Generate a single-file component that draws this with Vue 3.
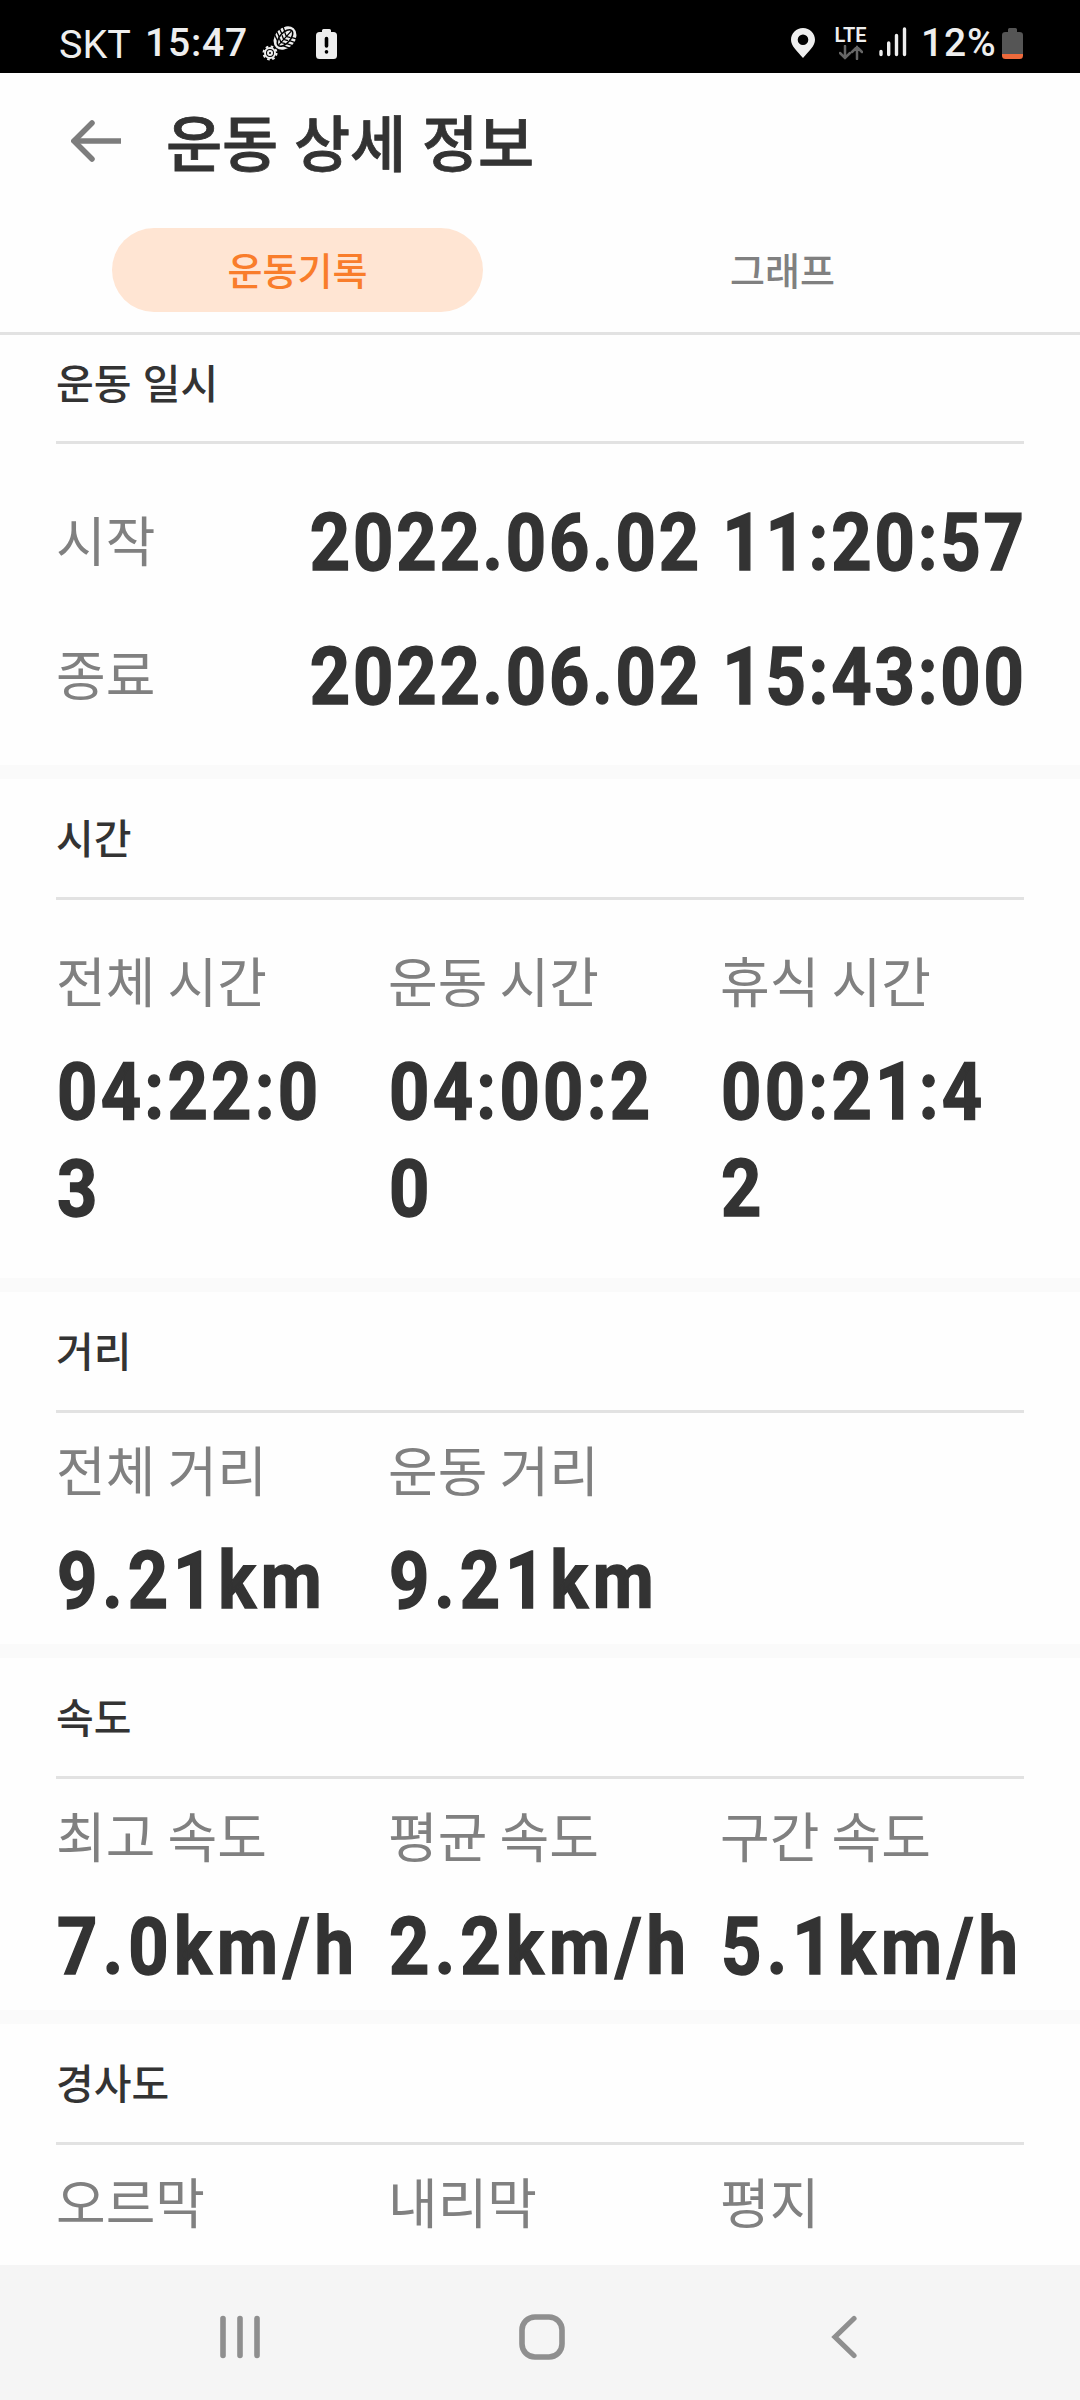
<script setup>
import { ref } from 'vue'

const tabs = ['운동기록', '그래프']
const activeTab = ref(0)

const period = [
    { label: '시작', value: '2022.06.02 11:20:57' },
    { label: '종료', value: '2022.06.02 15:43:00' }
]

const sections = [
    {
        key: 'time',
        title: '시간',
        items: [
            { label: '전체 시간', value: '04:22:03' },
            { label: '운동 시간', value: '04:00:20' },
            { label: '휴식 시간', value: '00:21:42' }
        ]
    },
    {
        key: 'distance',
        title: '거리',
        items: [
            { label: '전체 거리', value: '9.21km' },
            { label: '운동 거리', value: '9.21km' }
        ]
    },
    {
        key: 'speed',
        title: '속도',
        items: [
            { label: '최고 속도', value: '7.0km/h' },
            { label: '평균 속도', value: '2.2km/h' },
            { label: '구간 속도', value: '5.1km/h' }
        ]
    },
    {
        key: 'slope',
        title: '경사도',
        items: [
            { label: '오르막' },
            { label: '내리막' },
            { label: '평지' }
        ]
    }
]
</script>

<template>
    <div class="screen">
        <header class="status">
            <span class="carrier">SKT</span>
            <span class="clock">15:47</span>
            <svg class="boot" width="36" height="36" viewBox="0 0 36 36">
                <g transform="rotate(42 23 12)">
                    <ellipse cx="23" cy="12" rx="10" ry="13" fill="#eee" />
                    <path d="M23 3v18M12 4l6 3M11 8l7 3M11 12l7 3M12 16l7 3M34 4l-6 3M35 8l-7 3M35 12l-7 3M34 16l-7 3M19 8l4 2 4-2M19 12l4 2 4-2M19 16l4 2 4-2" fill="none" stroke="#000" stroke-width="1.300" />
                    <ellipse cx="23" cy="12" rx="5.200" ry="10" fill="none" stroke="#000" stroke-width="1.500" />
                </g>
                <circle cx="8" cy="27" r="6.500" fill="none" stroke="#eee" stroke-width="2" stroke-dasharray="2.600 2.500" />
                <circle cx="8" cy="27" r="5" fill="none" stroke="#eee" stroke-width="2" />
                <circle cx="8" cy="27" r="2" fill="none" stroke="#eee" stroke-width="2" />
            </svg>
            <svg class="alert" width="21" height="30" viewBox="0 0 21 30">
                <path d="M6 3V1.500Q6 0 7.500 0h6Q15 0 15 1.500V3h2.500Q21 3 21 6.500v20Q21 30 17.500 30h-14Q0 30 0 26.500v-20Q0 3 3.500 3z" fill="#eee" />
                <path d="M10.500 9.500v7.500M10.500 22.800v.2" fill="none" stroke="#000" stroke-width="3.600" stroke-linecap="round" />
            </svg>
            <svg class="pin" width="24" height="30" viewBox="0 0 24 30">
                <path d="M12 0C5.300 0 0 5.200 0 11.800 0 18 6 23 12 30c6-7 12-12 12-18.200C24 5.200 18.700 0 12 0zm0 6.500a5.300 5.300 0 1 1 0 10.600 5.300 5.300 0 0 1 0-10.600z" fill="#eee" />
            </svg>
            <div class="network">
                <span>LTE</span>
                <svg width="24" height="15" viewBox="0 0 24 15">
                    <path d="M6 1v12M1 8l5 5 5-5M18 14V2M13 7l5-5 5 5" fill="none" stroke="#666" stroke-width="2.500" stroke-linecap="round" />
                </svg>
            </div>
            <svg class="signal" width="28" height="30" viewBox="0 0 28 30">
                <path d="M2 24.500v3M9.700 16v11.500M17.500 8.500v19M25.500 2v25.500" fill="none" stroke="#eee" stroke-width="3.400" stroke-linecap="round" />
            </svg>
            <span class="percent">12%</span>
            <svg class="battery" width="21" height="31" viewBox="0 0 21 31">
                <path d="M6 4V1.500Q6 0 7.500 0h6Q15 0 15 1.500V4h2.500Q21 4 21 7v19H0V7Q0 4 3.500 4z" fill="#555" />
                <path d="M0 26h21v1.500q0 3.500-3.500 3.500h-14Q0 31 0 27.500z" fill="#ee6a3c" />
            </svg>
        </header>

        <div class="title-bar">
            <svg width="50" height="42" viewBox="0 0 50 42">
                <path d="M21 3 3 21l18 18" fill="none" stroke="#7d7d7d" stroke-width="5.500" stroke-linecap="round" />
                <path d="M3 21h47" fill="none" stroke="#7d7d7d" stroke-width="5.500" />
            </svg>
            <h1>운동 상세 정보</h1>
        </div>

        <nav class="tabs">
            <div
                v-for="(tab, index) in tabs"
                :key="tab"
                class="tab"
                :class="{ active: index === activeTab }"
                @click="activeTab = index"
            >{{ tab }}</div>
        </nav>

        <main>
            <section class="period">
                <h2>운동 일시</h2>
                <div v-for="row in period" :key="row.label" class="row">
                    <span class="label">{{ row.label }}</span>
                    <span class="value">{{ row.value }}</span>
                </div>
            </section>

            <section v-for="section in sections" :key="section.key" :class="section.key">
                <h2>{{ section.title }}</h2>
                <div class="grid">
                    <div v-for="item in section.items" :key="item.label" class="cell">
                        <div class="label">{{ item.label }}</div>
                        <div v-if="item.value" class="value">{{ item.value }}</div>
                    </div>
                </div>
            </section>
        </main>

        <footer class="nav-bar">
            <svg width="42" height="44" viewBox="0 0 42 44">
                <path d="M3 3.500v37M20 3.500v37M37 3.500v37" fill="none" stroke="#8f8f8f" stroke-width="5.600" stroke-linecap="round" />
            </svg>
            <svg class="home" width="46" height="46" viewBox="0 0 46 46">
                <rect x="3" y="3" width="40" height="40" rx="13" fill="none" stroke="#8f8f8f" stroke-width="5.600" />
            </svg>
            <svg class="back" width="26" height="44" viewBox="0 0 26 44">
                <path d="M23 3.500 4 22l19 18.500" fill="none" stroke="#8f8f8f" stroke-width="5.200" stroke-linecap="round" />
            </svg>
        </footer>
    </div>
</template>

<style>
body {
    margin: 0;
    background: #fff;
}
</style>

<style scoped>
.screen {
    display: flex;
    flex-direction: column;
    width: 1080px;
    height: 2400px;
    overflow: hidden;
    background: #fefefe;
    color: #333;
    font-family: "Noto Sans CJK KR", sans-serif;
}
.status {
    display: flex;
    flex: none;
    box-sizing: border-box;
    height: 73px;
    padding: 27px 57px 0 59px;
    background: #000;
    color: #eee;
    font-family: Roboto, sans-serif;
    font-size: 39px;
    line-height: 32px;
}
.carrier {
    width: 86px;
    padding-top: 2px;
    font-size: 39.500px;
}
.clock {
    width: 117px;
    font-weight: 500;
    letter-spacing: 0.800px;
}
.boot {
    margin-top: -1px;
}
.alert {
    margin: 2px 0 0 18px;
}
.pin {
    margin: 1px 19px 0 auto;
}
.network {
    display: flex;
    flex-direction: column;
    align-items: center;
    width: 33px;
    margin-right: 12px;
    font-size: 20px;
    font-weight: 600;
    line-height: 16px;
}
.network svg {
    margin-top: 2px;
}
.signal {
    margin-right: 14px;
}
.percent {
    width: 81px;
    font-weight: 500;
    letter-spacing: 0.800px;
}
.battery {
    margin-top: 1px;
}
.title-bar {
    display: flex;
    flex: none;
    align-items: center;
    height: 135px;
    padding-left: 71px;
}
.title-bar h1 {
    margin: 0 0 0 45px;
    font-size: 61px;
    font-weight: 500;
    line-height: 90px;
    word-spacing: 2px;
    -webkit-text-stroke: 0.800px #333;
}
.tabs {
    display: flex;
    flex: none;
    box-sizing: border-box;
    height: 127px;
    padding: 20px 112px 0;
    justify-content: space-between;
    border-bottom: 3px solid #e2e2e2;
}
.tab {
    width: 371px;
    height: 84px;
    border-radius: 42px;
    color: #808080;
    font-size: 38px;
    font-weight: 500;
    line-height: 82px;
    text-align: center;
}
.tab.active {
    background: #ffe5d3;
    color: #f97d2b;
}
main {
    flex: 1;
    overflow: hidden;
}
section {
    box-sizing: border-box;
    padding: 0 56px;
    border-bottom: 14px solid #fafafa;
}
h2 {
    box-sizing: border-box;
    height: 121px;
    margin: 0;
    border-bottom: 3px solid #e2e2e2;
    font-size: 41px;
    font-weight: 500;
    line-height: 115px;
    word-spacing: 2px;
}
.label {
    color: #808080;
    font-size: 54px;
    line-height: 79px;
    white-space: nowrap;
}
/* narrow, heavy numerals */
.value {
    width: 339px;
    color: #333;
    font-family: Roboto, sans-serif;
    font-size: 80px;
    font-weight: 700;
    letter-spacing: 3.200px;
    line-height: 97px;
    white-space: nowrap;
    transform: scaleX(0.88);
    transform-origin: 0 0;
    -webkit-text-stroke: 1.500px #333;
}
.grid {
    display: grid;
    grid-template-columns: repeat(3, 332px);
    padding-top: 16px;
}
.grid .value {
    margin: 25px 0 0 1px;
}
.period {
    height: 444px;
}
.period h2 {
    height: 109px;
    line-height: 93px;
}
.period .row {
    display: flex;
    justify-content: space-between;
    align-items: center;
    height: 134px;
}
.period h2 + .row {
    margin-top: 32px;
}
.period .label {
    margin-bottom: 10px;
}
.period .value {
    width: auto;
    margin-right: -3px;
    transform-origin: 100% 0;
}
.time {
    height: 513px;
}
.time .grid {
    padding-top: 40px;
}
.time .value {
    letter-spacing: 3.700px;
    white-space: normal;
    word-break: break-all;
}
.distance,
.speed {
    height: 366px;
}
.distance .value {
    letter-spacing: 5.600px;
}
.speed .value {
    letter-spacing: 6px;
}
.slope {
    border-bottom: 0;
}
.nav-bar {
    display: flex;
    flex: none;
    align-items: center;
    box-sizing: border-box;
    height: 135px;
    padding: 8px 0 0 220px;
    background: #f5f5f5;
}
.home {
    margin-left: 257px;
}
.back {
    margin-left: 266px;
}
</style>
